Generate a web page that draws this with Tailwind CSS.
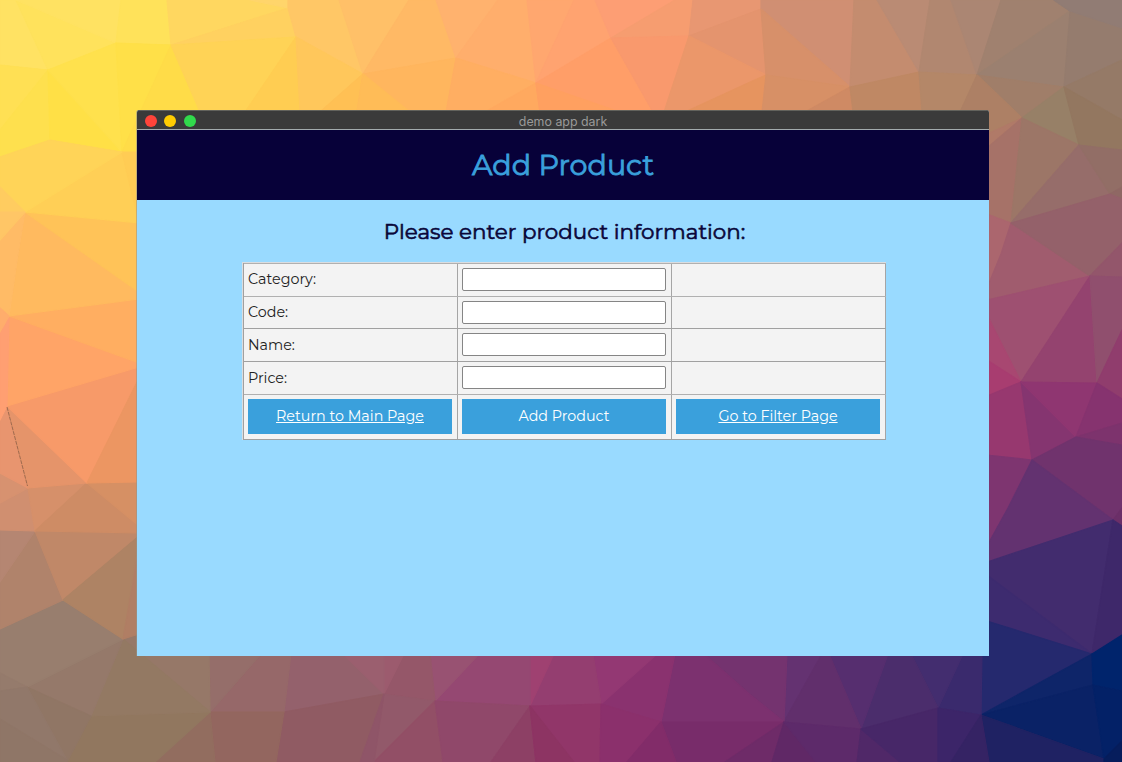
<!DOCTYPE html>
<html lang="en">
<head>
<meta charset="utf-8">
<title>Add Product</title>
<script src="https://cdn.jsdelivr.net/npm/@tailwindcss/browser@4"></script>
</head>
<body class="relative h-screen overflow-hidden bg-[#b08068] font-[Montserrat,Inter,'Liberation_Sans',sans-serif]">
<svg id="wall" class="absolute inset-0" width="1122" height="762" viewBox="0 0 1122 762" aria-hidden="true"></svg>
<main class="relative flex h-[762px] pt-[110px] pl-[137px]">
  <section class="flex h-[546px] w-[852px] flex-col overflow-hidden rounded-t-[3px] bg-[#99daff] shadow-[-1px_0_0_rgba(150,150,140,.55)]">
    <div class="relative flex h-5 shrink-0 items-center justify-center border-t border-b border-t-[#62625c] border-b-[#a3abad] bg-[#3a3a3a]">
      <div class="absolute top-[4px] left-[7.6px] flex gap-[7.6px]">
        <span class="size-3 rounded-full bg-[#ff443a]"></span>
        <span class="size-3 rounded-full bg-[#ffcc02]"></span>
        <span class="size-3 rounded-full bg-[#31d94c]"></span>
      </div>
      <span class="mt-[4px] font-[Inter] text-[12.4px] leading-4 whitespace-nowrap text-[#999]">demo app dark</span>
    </div>
    <header class="flex h-[70px] shrink-0 items-center justify-center bg-[#070139]">
      <h1 class="text-[28.6px] font-normal whitespace-nowrap text-[#3aa0dc] [-webkit-text-stroke:0.8px_#3aa0dc]">Add Product</h1>
    </header>
    <h2 class="mt-[15px] flex h-8 shrink-0 items-center justify-center pl-[3px] text-[21.45px] font-normal text-[#090639] [-webkit-text-stroke:0.6px_#090639]"><span class="whitespace-nowrap">Please enter product information:</span></h2>
    <div class="mt-[15px] ml-[105px] w-[644px] border-t border-l border-[#dadde0] bg-[#f3f3f3] text-[14.3px] text-[#222]">
      <div class="border-b border-l border-[#a0a0a0]">
        <div class="grid h-[33px] grid-cols-[214px_214px_214px] border-t border-[#b0b0b0]">
          <div class="flex items-center border-r border-[#a5a5a5] pl-1"><span>Category:</span></div>
          <div class="border-r border-[#a5a5a5] px-1 pt-1"><input class="block h-[23px] w-[204px] rounded-[2px] border border-[#858585] bg-white" aria-label="Category"></div>
          <div class="border-r border-[#a5a5a5]"></div>
        </div>
        <div class="grid h-8 grid-cols-[214px_214px_214px] border-t border-[#b0b0b0]">
          <div class="flex items-center border-r border-[#a5a5a5] pl-1"><span>Code:</span></div>
          <div class="border-r border-[#a5a5a5] px-1 pt-1"><input class="block h-[23px] w-[204px] rounded-[2px] border border-[#858585] bg-white" aria-label="Code"></div>
          <div class="border-r border-[#a5a5a5]"></div>
        </div>
        <div class="grid h-[33px] grid-cols-[214px_214px_214px] border-t border-[#a0a0a0]">
          <div class="flex items-center border-r border-[#a5a5a5] pt-0.5 pl-1"><span>Name:</span></div>
          <div class="border-r border-[#a5a5a5] px-1 pt-1"><input class="block h-[23px] w-[204px] rounded-[2px] border border-[#858585] bg-white" aria-label="Name"></div>
          <div class="border-r border-[#a5a5a5]"></div>
        </div>
        <div class="grid h-[33px] grid-cols-[214px_214px_214px] border-t border-[#a0a0a0]">
          <div class="flex items-center border-r border-[#a5a5a5] pt-px pl-1"><span>Price:</span></div>
          <div class="border-r border-[#a5a5a5] px-1 pt-1"><input class="block h-[23px] w-[204px] rounded-[2px] border border-[#858585] bg-white" aria-label="Price"></div>
          <div class="border-r border-[#a5a5a5]"></div>
        </div>
        <div class="grid h-[45px] grid-cols-[214px_214px_214px] border-t border-[#b0b0b0] text-[14.3px] text-white">
          <div class="border-r border-[#a5a5a5] px-1 pt-1"><a class="flex h-[35px] w-[204px] items-center justify-center bg-[#3aa0dc] underline">Return to Main Page</a></div>
          <div class="border-r border-[#a5a5a5] px-1 pt-1"><button class="flex h-[35px] w-[204px] items-center justify-center bg-[#3aa0dc]">Add Product</button></div>
          <div class="border-r border-[#a5a5a5] px-1 pt-1"><a class="flex h-[35px] w-[204px] items-center justify-center bg-[#3aa0dc] underline">Go to Filter Page</a></div>
        </div>
      </div>
    </div>
  </section>
</main>
<script>
// Low-poly wallpaper: one facet per line, colour then points.
const facets = `
ffe263 0,0 16,0 48,70 0,65
ffe25c 16,0 116,43 48,70
ffe262 16,0 121,0 116,43
ffe25a 121,0 167,0 171,45 116,43
ffd760 167,0 250,0 288,8 171,45
ffd160 171,45 288,8 296,37
ffd56b 250,0 288,0 288,8
ffc766 288,0 339,0 363,74 296,37 288,8
ffc068 339,0 409,0 374,56 363,74
ffe054 0,65 48,70 0,130
fee04e 48,70 50,140 0,157 0,130
ffe046 48,70 122,152 50,140
ffe14d 48,70 116,43 122,152
ffe048 116,43 171,45 122,152
ffdc48 171,45 200,112 139,112 139,152 122,152
ffd356 171,45 296,37 245,112 200,112
ffcd52 296,37 300,112 245,112
ffc75b 296,37 363,74 320,112 300,112
ffc054 363,74 357,112 320,112
ffb965 363,74 374,56 409,0 436,0 456,58 363,74
ffb65e 363,74 456,58 446,112 357,112
ffbc57 363,74 374,83 410,112 357,112
ffb26e 436,0 498,0 456,58
ffae6c 498,0 527,0 536,83 456,58
ffae62 456,58 536,83 485,112 446,112
ffa95f 536,83 540,112 485,112
ffa76f 527,0 574,0 536,83
ffa370 574,0 595,0 611,38 536,83
ff9e68 536,83 611,38 653,112 540,112
ffa060 536,83 620,112 540,112
fd9e74 595,0 675,0 611,38
f69d70 675,0 693,0 689,36 611,38
f9996d 611,38 689,36 664,112 653,112
e89772 693,0 761,0 761,9 689,36
e4946e 689,36 761,9 766,75
eb976a 689,36 766,75 748,83 685,112 664,112
e6945f 748,83 766,75 762,112 685,112
d08f73 761,0 854,0 850,87 761,9
d7906a 761,9 850,87 766,75
d79066 766,75 850,87 805,112 762,112
cf8a64 850,87 853,112 805,112
c48c6f 854,0 877,0 919,72 850,87
ba8b74 877,0 930,0 919,72
bf8864 919,72 850,87 853,112 922,112
b18770 930,0 951,0 977,75 919,72
ab8673 951,0 1001,0 977,75
b48768 919,72 977,75 960,112 922,112
a0816f 1001,0 1054,0 1070,11 977,75
9b8070 1070,11 977,75 1064,87
957c6e 1054,0 1122,0 1122,60 1064,87 1070,11
917c74 1054,0 1122,0 1122,28 1070,11
a07e69 977,75 1064,87 1022,118
ad8065 977,75 1022,118 987,134 987,112 960,112
978067 1064,87 1079,145 1022,118
957a67 1064,87 1122,60 1122,120
937760 1064,87 1122,120 1122,150 1079,145
b07a68 987,134 1022,118 987,148
a67268 1022,118 1011,223 987,214 987,148
9c7667 1022,118 1079,145 1011,223
966d6a 1079,145 1110,194 1011,223
926e66 1079,145 1122,150 1122,187 1110,194
8f6864 1110,194 1122,187 1122,199
ab666e 987,214 1011,223 1001,254 987,290
a05c6e 1011,223 1090,276 987,300 987,288 1001,254
94616a 1011,223 1110,194 1122,199 1122,243 1090,276
93566b 1090,276 1122,243 1122,277
9e5071 987,300 1090,276 1021,382 987,315
a84771 987,315 1021,382 987,360
a83d70 987,360 1021,382 987,397
94436f 1090,276 1097,383 1021,382
904f6e 1090,276 1122,277 1122,330 1097,383
903d6d 1097,383 1122,330 1122,399
97386f 987,396 1021,382 1032,460 987,455
853570 1021,382 1076,437 1032,460
8f3671 1021,382 1097,383 1076,437
86336f 1097,383 1122,399 1122,423 1076,437
7d336d 1076,437 1122,423 1122,445
70336d 1032,460 1076,437 1122,445 1122,508 1113,520
7e3570 987,455 1032,460 1008,508 987,546
633270 1032,460 1113,520 987,562 987,546 1008,508
6b2f68 1113,520 1122,508 1122,526
422c6e 987,562 1113,520 1092,654 987,577
3d2b6f 987,575 1092,654 987,622
3e286a 1113,520 1122,526 1122,635 1092,654
25296e 987,621 1092,654 981,715 982,654
0e2569 1092,654 1093,685 981,715
00246c 1092,654 1122,635 1122,691 1093,685
0a2266 1093,685 1104,759 981,715
032167 1093,685 1122,691 1122,741 1104,759
1f2263 981,715 1104,759 1104,762 989,762
061d5c 1104,759 1122,741 1122,762 1104,762
3a2a6d 963,654 982,654 981,715 938,708
432d6f 911,654 963,654 938,708
4b2d6c 888,654 911,654 938,708 861,729
562e6f 829,654 888,654 861,729
643271 787,654 822,654 784,722
612f6c 822,654 829,654 861,729 784,722
74336f 704,654 787,654 784,722 748,693
7c316f 675,654 704,654 748,693 784,722 661,722
782c6a 661,722 784,722 725,762 676,762
6e2b68 784,722 725,762 772,762
602866 784,722 816,762 772,762
5d2a6a 784,722 861,729 857,762 816,762
502868 861,729 900,762 857,762
472768 861,729 938,708 938,762 900,762
3c2569 938,708 981,715 951,762 938,762
352364 981,715 989,762 951,762
8a326f 601,704 657,654 675,654 661,722
933873 593,654 657,654 601,704
943e70 554,654 593,654 601,704 530,706
9f4171 530,654 554,654 530,706
954872 479,654 530,654 530,706 435,701
985272 430,654 479,654 435,701
955769 404,654 430,654 435,701 384,694
9c5b6e 384,654 404,654 384,694
92596a 384,694 435,701 374,762
924f66 435,701 443,762 374,762
90486a 435,701 530,706 491,762 443,762
8d4065 530,706 536,762 491,762
913669 530,706 601,704 600,762 536,762
8d3463 530,706 574,762 536,762
8b306c 601,704 661,722 627,762 600,762
822c69 661,722 676,762 627,762
94616c 291,654 343,654 384,694 284,712
9b5f6f 343,654 384,654 384,694
905b63 284,712 384,694 360,762 276,762
8f5568 384,694 374,762 360,762
966869 261,654 291,654 284,712 210,712
956e6a 209,654 261,654 210,712
93665f 210,712 284,712 276,762 215,762
926d5f 210,712 215,762 155,762
91775f 91,716 210,712 155,762 67,762
967868 123,639 139,634 209,654 210,712
937963 123,639 210,712 91,716
95796a 27,687 123,639 91,716
987e6e 0,629 63,600 123,639 27,687 0,673
907665 27,687 91,716 67,762
957b6c 0,673 27,687 0,691
91786a 0,691 27,687 67,760 0,719
8f7667 0,719 67,760 67,762 0,762
b0836b 35,531 63,600 0,629 0,582
b58672 0,530 35,531 0,582
c08868 35,531 139,533 139,536 63,600
ae8364 63,600 139,536 123,639
b07e64 137,560 139,560 139,634 123,639
d08f70 28,488 35,531 0,530 0,503
d79270 0,473 28,488 0,503
d6906a 28,488 87,483 35,531
ce8c65 87,483 35,531 139,533 139,526
d69064 87,483 139,482 139,526
e8956f 7,406 28,488 0,473 0,420
e5946a 7,406 87,483 28,488
f79a69 7,406 139,367 139,378 87,483
ec9662 139,378 139,482 87,483
ffa467 9,316 139,363 139,367 7,406
ff9f72 0,332 9,316 7,406 0,420
ffae61 9,316 139,299 139,363
ffba5f 25,212 139,292 139,299 9,316
ffbb66 0,240 25,212 18,254 9,316 0,308
ffad6c 0,308 9,316 0,332
ffc358 25,212 139,223 139,292
ffcf56 122,152 139,223 25,212
ffcc54 122,152 139,152 139,223
ffd458 0,157 50,140 122,152 25,212 0,187
ffcc60 0,187 25,212 0,212
ffc666 0,212 25,212 0,240`;
const ns = 'http://www.w3.org/2000/svg', wall = document.getElementById('wall');
facets.trim().split('\n').forEach(l => {
  const p = document.createElementNS(ns, 'polygon'), i = l.indexOf(' '), c = '#' + l.slice(0, i);
  p.setAttribute('points', l.slice(i + 1));
  p.setAttribute('fill', c);
  p.setAttribute('stroke', c);
  p.setAttribute('stroke-width', '1.2');
  p.setAttribute('stroke-linejoin', 'round');
  wall.appendChild(p);
});
const crack = document.createElementNS(ns, 'path');
crack.setAttribute('d', 'M7 407 L27.5 486');
crack.setAttribute('stroke', '#8d6047');
crack.setAttribute('stroke-width', '.8');
crack.setAttribute('stroke-dasharray', '4 1');
wall.appendChild(crack);
</script>
</body>
</html>
